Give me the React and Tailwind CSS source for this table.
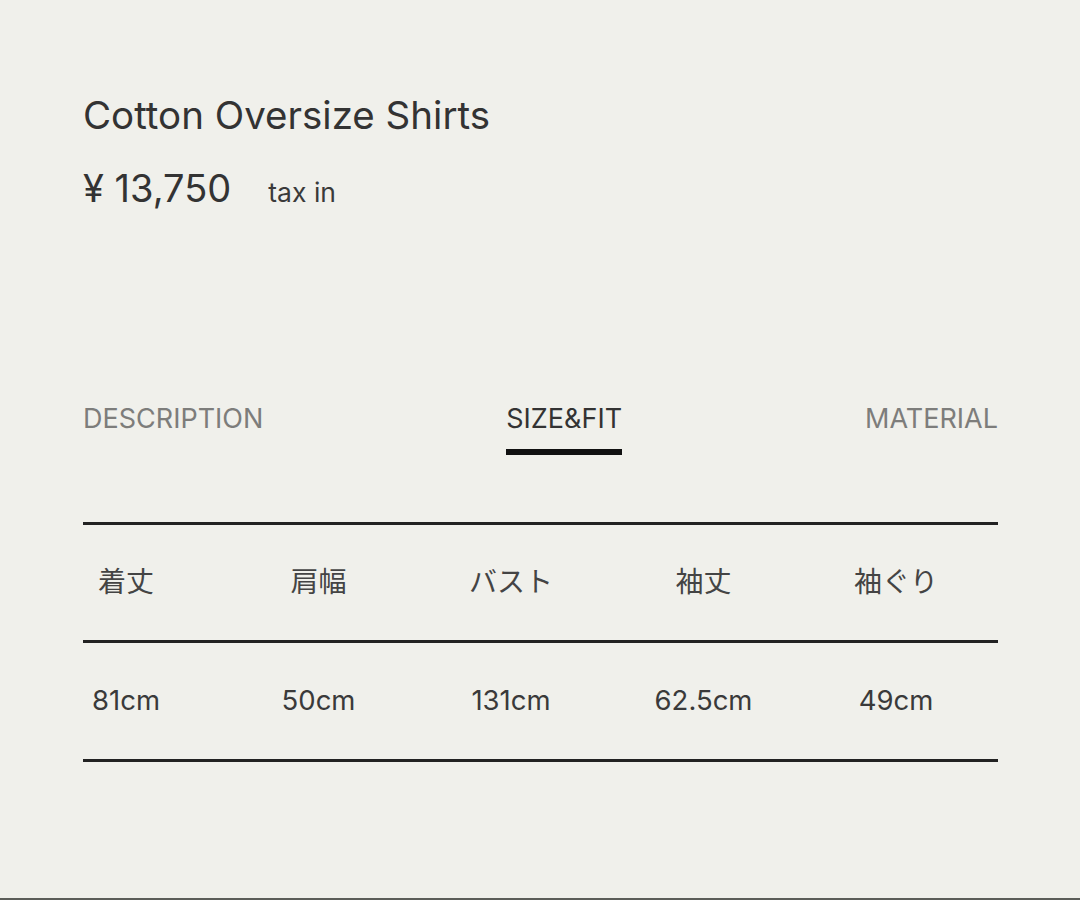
export default function App() {
  const heads = ["着丈", "肩幅", "バスト", "袖丈", "袖ぐり"];
  const vals = ["81cm", "50cm", "131cm", "62.5cm", "49cm"];
  return (
    <div
      className="w-[1080px] h-[900px] bg-[#f0f0eb] text-[#333333] overflow-hidden flex flex-col border-b-2 border-[#5b5d58]"
      style={{ fontFamily: 'Inter, "Noto Sans CJK JP", sans-serif' }}
    >
      <div className="pl-[83px] w-[998px]">
        <h1 className="mt-[92px] text-[38.5px] leading-[46px] font-normal text-[#333]">Cotton Oversize Shirts</h1>
        <div className="mt-[27px] flex items-baseline">
          <span className="text-[38px] leading-[46px]">¥ 13,750</span>
          <span className="ml-[37px] text-[26.5px] text-[#3a3a3a]">tax in</span>
        </div>
        <div className="mt-[189px] flex justify-between items-start text-[27px] leading-[34px]">
          <span className="text-[#7d7d7b]">DESCRIPTION</span>
          <div className="flex flex-col items-center">
            <span className="text-[#333]">SIZE&amp;FIT</span>
            <div className="mt-[13px] h-[6px] w-full bg-[#111]" />
          </div>
          <span className="text-[#7d7d7b]">MATERIAL</span>
        </div>
        <div className="mt-[67px] border-t-[3px] border-[#222]">
          <div className="h-[115px] flex items-center justify-between pl-[43px] pr-[102px] text-[28px] text-[#444]">
            {heads.map((h) => (
              <div key={h} className="w-0 flex justify-center whitespace-nowrap">{h}</div>
            ))}
          </div>
          <div className="border-t-[3px] border-[#222] h-[119px] flex items-center justify-between pl-[43px] pr-[102px] text-[27.5px] text-[#3a3a3a]">
            {vals.map((v) => (
              <div key={v} className="w-0 flex justify-center whitespace-nowrap">{v}</div>
            ))}
          </div>
          <div className="border-t-[3px] border-[#222]" />
        </div>
      </div>
    </div>
  );
}
